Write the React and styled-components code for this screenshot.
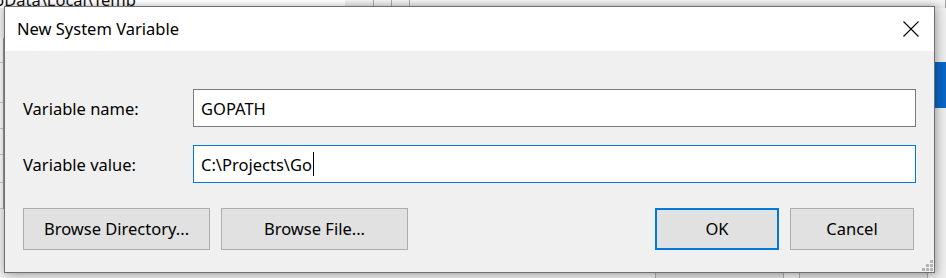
import React from "react";
import styled, { createGlobalStyle } from "styled-components";

const Global = createGlobalStyle`
  html, body { margin: 0; padding: 0; background: #f0f0f0; }
  * { box-sizing: border-box; }
  body { font-family: "Noto Sans", "Open Sans", sans-serif; }
`;

const Desktop = styled.div`
  position: relative;
  width: 946px;
  height: 278px;
  overflow: hidden;
  background: #eeeeee;
  padding: 6px 11px 5px 4px;
`;

/* ---- window lying behind the dialog ---- */
const BackWindow = styled.div`
  position: absolute;
  inset: 0;
  z-index: 0;
`;

const BackHeader = styled.div`
  position: absolute;
  left: 0;
  top: 0;
  width: 946px;
  height: 8px;
  display: flex;
`;

const PathCell = styled.div`
  width: 345px;
  background: #ffffff;
  font-size: 16.5px;
  line-height: 17px;
  margin-top: -9px;
  color: #111;
  white-space: nowrap;
  overflow: hidden;
  text-indent: -6px;
`;

const HeaderCell = styled.div`
  width: ${(p) => p.$w}px;
  background: linear-gradient(#f4f4f4, #e4e4e4);
  border-right: 1px solid #a8a8a8;
`;

const BackList = styled.div`
  position: absolute;
  left: 0;
  top: 38px;
  width: 4px;
  display: flex;
  flex-direction: column;
  border-right: 1px solid #9a9a9a;
`;

const BackRow = styled.div`
  height: ${(p) => p.$h}px;
  border-bottom: 1px solid #c4c4c4;
  background: #f6f6f6;
`;

const SelectedBar = styled.div`
  position: absolute;
  left: 935px;
  top: 62px;
  width: 11px;
  height: 46px;
  background: #0967c6;
`;

const BackButtons = styled.div`
  position: absolute;
  left: 655px;
  top: 272px;
  display: flex;
  gap: 15px;
`;

const BackButton = styled.div`
  width: 129px;
  height: 40px;
  border: 1px solid #adadad;
  background: #e1e1e1;
  font-size: 16.5px;
  text-align: center;
  padding-top: 4px;
  color: #000;
`;

/* ---- the dialog ---- */
const Dialog = styled.div`
  position: relative;
  z-index: 1;
  width: 100%;
  height: 100%;
  border: 1px solid #6f6f6f;
  background: #f0f0f0;
  box-shadow: 0 0 7px rgba(0, 0, 0, 0.22), 3px 3px 10px rgba(0, 0, 0, 0.18);
  display: flex;
  flex-direction: column;
  color: #000;
`;

const TitleBar = styled.div`
  height: 44px;
  background: #ffffff;
  display: flex;
  align-items: center;
  justify-content: space-between;
  padding-left: 12px;
`;

const Title = styled.div`
  font-size: 16.5px;
  line-height: 20px;
  padding-bottom: 1px;
`;

const CloseButton = styled.div`
  width: 46px;
  height: 44px;
  display: flex;
  align-items: center;
  justify-content: center;
`;

const Body = styled.div`
  flex: 1;
  position: relative;
  display: flex;
  flex-direction: column;
  padding: 38px 18px 0 18px;
`;

const Form = styled.div`
  display: grid;
  grid-template-columns: 170px 1fr;
  row-gap: 18px;
  align-items: center;
`;

const Label = styled.div`
  font-size: 16.5px;
  line-height: 20px;
  padding-top: 1px;
`;

const TextField = styled.div`
  height: 38px;
  background: #ffffff;
  border: 1px solid ${(p) => (p.$focused ? "#0078d7" : "#7a7a7a")};
  font-size: 16.5px;
  display: flex;
  align-items: center;
  padding-left: 7px;
  white-space: nowrap;
`;

const Caret = styled.span`
  display: inline-block;
  width: 1px;
  height: 24px;
  background: #000;
  margin-left: 1px;
`;

const ButtonRow = styled.div`
  margin-top: 25px;
  display: flex;
  align-items: center;
`;

const Button = styled.div`
  width: ${(p) => p.$w}px;
  height: 42px;
  margin-right: ${(p) => p.$mr || 0}px;
  background: #e1e1e1;
  border: ${(p) => (p.$default ? "2px solid #0078d7" : "1px solid #adadad")};
  font-size: 16.5px;
  display: flex;
  align-items: center;
  justify-content: center;
  padding-bottom: 1px;
`;

const Spacer = styled.div`
  flex: 1;
`;

const Grip = styled.svg`
  position: absolute;
  right: 0px;
  bottom: 0px;
`;

export default function App() {
  return (
    <>
      <Global />
      <Desktop>
        <BackWindow>
          <BackHeader>
            <PathCell>pData\Local\Temp</PathCell>
            <HeaderCell $w={29} />
            <HeaderCell $w={18} />
            <HeaderCell $w={18} />
            <HeaderCell $w={536} />
          </BackHeader>
          <BackList>
            <BackRow $h={25} />
            <BackRow $h={40} />
            <BackRow $h={26} />
            <BackRow $h={26} />
            <BackRow $h={28} />
            <BackRow $h={26} />
          </BackList>
          <SelectedBar />
          <BackButtons>
            <BackButton>OK</BackButton>
            <BackButton>Cancel</BackButton>
          </BackButtons>
        </BackWindow>

        <Dialog>
          <TitleBar>
            <Title>New System Variable</Title>
            <CloseButton>
              <svg width="16" height="16" viewBox="0 0 16 16">
                <path d="M0.5 0.5 L15.5 15.5 M15.5 0.5 L0.5 15.5" stroke="#000" strokeWidth="1.1" fill="none" />
              </svg>
            </CloseButton>
          </TitleBar>
          <Body>
            <Form>
              <Label>Variable name:</Label>
              <TextField>GOPATH</TextField>
              <Label>Variable value:</Label>
              <TextField $focused>
                C:\Projects\Go
                <Caret />
              </TextField>
            </Form>
            <ButtonRow>
              <Button $w={187} $mr={11}>Browse Directory...</Button>
              <Button $w={187}>Browse File...</Button>
              <Spacer />
              <Button $w={124} $mr={11} $default>OK</Button>
              <Button $w={124} $mr={2}>Cancel</Button>
            </ButtonRow>
            <Grip width="12" height="12" viewBox="0 0 12 12">
              <rect x="8" y="0" width="3" height="3" fill="#b4b4b4" />
              <rect x="4" y="4" width="3" height="3" fill="#b4b4b4" />
              <rect x="8" y="4" width="3" height="3" fill="#b4b4b4" />
              <rect x="0" y="8" width="3" height="3" fill="#b4b4b4" />
              <rect x="4" y="8" width="3" height="3" fill="#b4b4b4" />
              <rect x="8" y="8" width="3" height="3" fill="#b4b4b4" />
            </Grip>
          </Body>
        </Dialog>
      </Desktop>
    </>
  );
}
